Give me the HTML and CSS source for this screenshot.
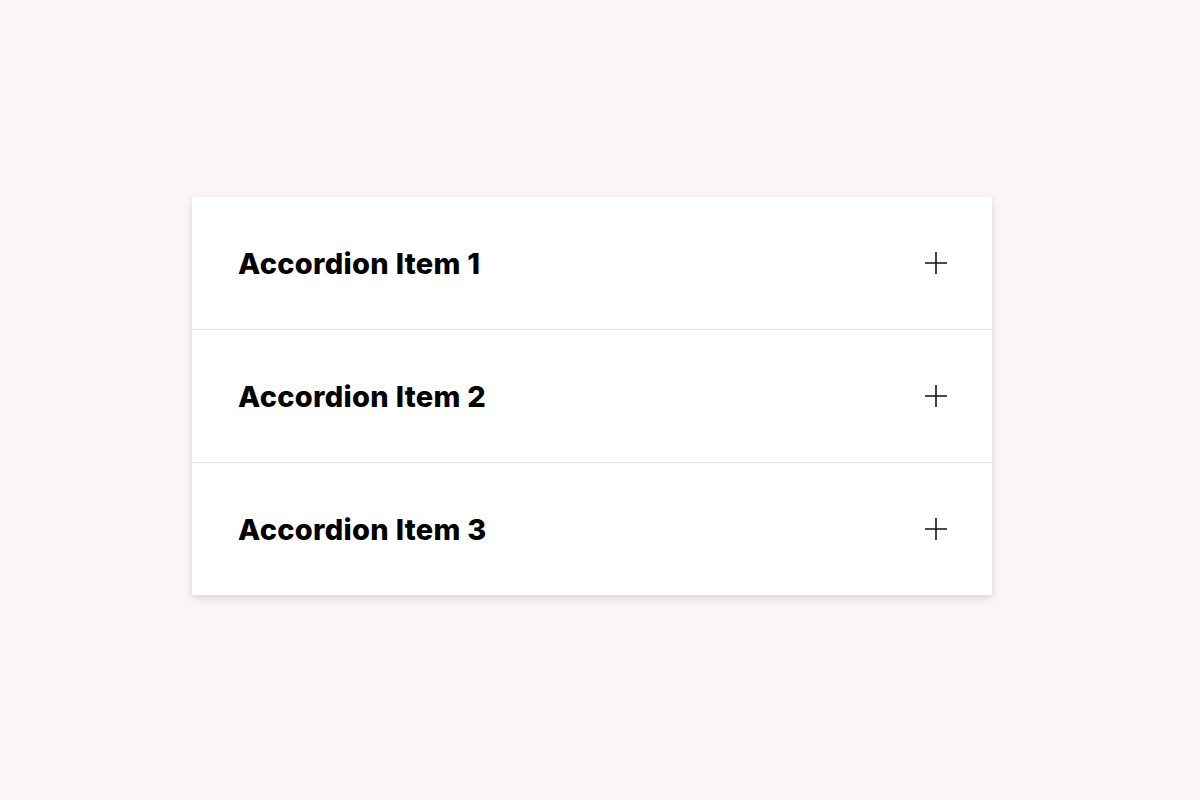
FILE: index.html
```html
<!DOCTYPE html>
<html lang="en">
<head>
  <meta charset="UTF-8" />
  <meta name="viewport" content="width=device-width, initial-scale=1.0" />
  <title>Accordion</title>
  <link rel="stylesheet" href="styles.css">
</head>
<body>
  <div class="accordion">
    <div class="item">
      <button class="item-head">
        <span class="title">Accordion Item 1</span>
        <svg class="plus" width="24" height="24" viewBox="0 0 24 24"><path d="M12 1v22M1 12h22" /></svg>
      </button>
    </div>
    <div class="item">
      <button class="item-head">
        <span class="title">Accordion Item 2</span>
        <svg class="plus" width="24" height="24" viewBox="0 0 24 24"><path d="M12 1v22M1 12h22" /></svg>
      </button>
    </div>
    <div class="item">
      <button class="item-head">
        <span class="title">Accordion Item 3</span>
        <svg class="plus" width="24" height="24" viewBox="0 0 24 24"><path d="M12 1v22M1 12h22" /></svg>
      </button>
    </div>
  </div>
</body>
</html>
```

FILE: styles.css
```css
body {
  margin: 0;
  padding: 0;
  background-color: #fbf5f6;
  font-family: Inter, "Open Sans", sans-serif;
  height: 100vh;
}

.accordion {
  width: 800px;
  margin: 197px 0 0 192px;
  background-color: #fff;
  box-shadow: 0 3px 8px rgba(0, 0, 0, 0.14);
}

.item + .item {
  border-top: 1px solid #e6e6e6;
}

.item-head {
  width: 100%;
  height: 132px;
  padding: 0 44px 0 46px;
  display: flex;
  align-items: center;
  justify-content: space-between;
  background: none;
  border: none;
  cursor: pointer;
  font-family: inherit;
  text-align: left;
}

.title {
  font-size: 29px;
  font-weight: 800;
  color: #000;
  letter-spacing: 0.3px;
}

.plus {
  stroke: #111;
  stroke-width: 1.6;
  fill: none;
}
```
